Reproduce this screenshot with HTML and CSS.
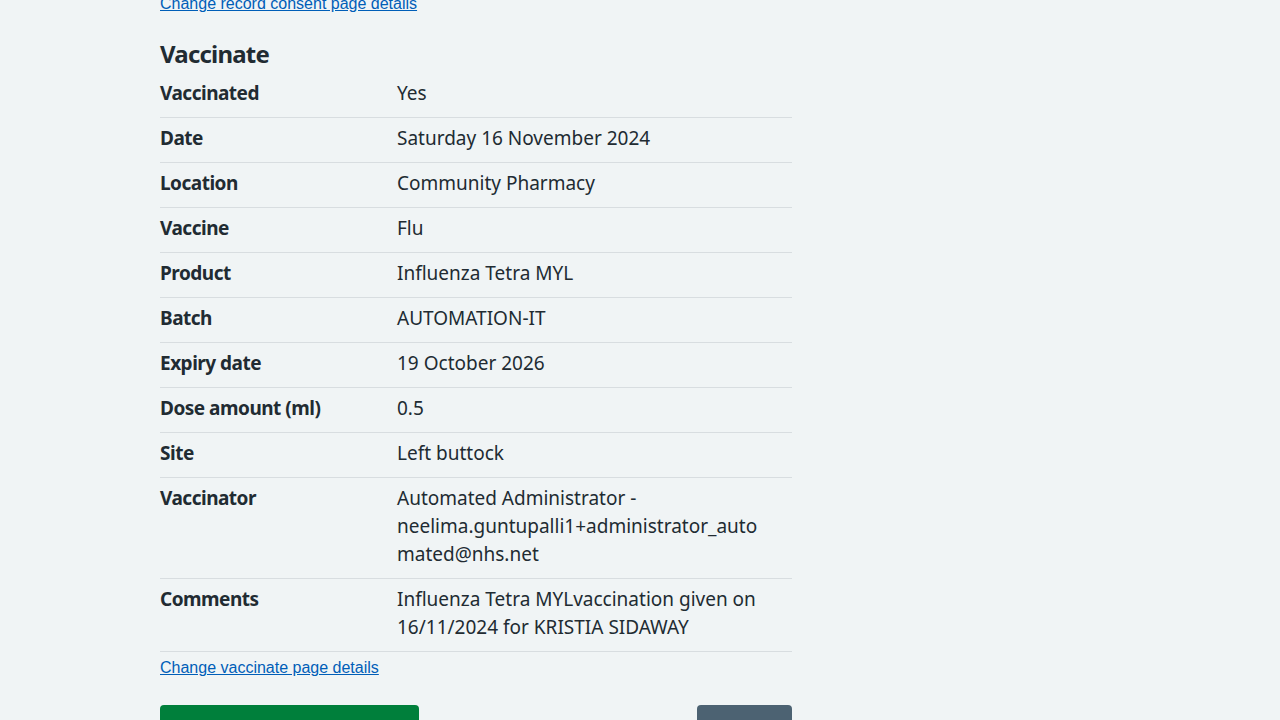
FILE: index.html
```html
<!DOCTYPE html>
<html lang="en">
<head>
<meta charset="utf-8">
<title>Check and confirm</title>
<link rel="stylesheet" href="styles.css">
</head>
<body>
<div class="container">
  <div class="column">
    <p class="change-link top-link"><a href="#">Change record consent page details</a></p>
    <h2 class="heading">Vaccinate</h2>
    <dl class="summary">
      <div class="row"><dt>Vaccinated</dt><dd>Yes</dd></div>
      <div class="row"><dt>Date</dt><dd>Saturday 16 November 2024</dd></div>
      <div class="row"><dt>Location</dt><dd>Community Pharmacy</dd></div>
      <div class="row"><dt>Vaccine</dt><dd>Flu</dd></div>
      <div class="row"><dt>Product</dt><dd>Influenza Tetra MYL</dd></div>
      <div class="row"><dt>Batch</dt><dd>AUTOMATION-IT</dd></div>
      <div class="row"><dt>Expiry date</dt><dd>19 October 2026</dd></div>
      <div class="row"><dt>Dose amount (ml)</dt><dd>0.5</dd></div>
      <div class="row"><dt>Site</dt><dd>Left buttock</dd></div>
      <div class="row"><dt>Vaccinator</dt><dd>Automated Administrator -<br>neelima.guntupalli1+administrator_auto<br>mated@nhs.net</dd></div>
      <div class="row"><dt>Comments</dt><dd>Influenza Tetra MYLvaccination given on<br>16/11/2024 for KRISTIA SIDAWAY</dd></div>
    </dl>
    <p class="change-link bottom-link"><a href="#">Change vaccinate page details</a></p>
    <div class="actions">
      <button class="btn btn-primary" type="button">Confirm and save</button>
      <button class="btn btn-secondary" type="button">Back</button>
    </div>
  </div>
</div>
</body>
</html>
```

FILE: styles.css
```css
html, body {
  margin: 0;
  padding: 0;
  background: #f0f4f5;
  color: #212b32;
  font-family: "Noto Sans", "Open Sans", sans-serif;
  overflow: hidden;
}

.container {
  width: 960px;
  margin: 0 auto;
}

.column {
  width: 632px;
}

.change-link {
  font-family: "Liberation Sans", Arial, sans-serif;
  font-size: 16px;
  margin: 0;
}

.change-link a {
  color: #005eb8;
  text-decoration: underline;
}

.top-link {
  margin-top: -5px;
}

.heading {
  font-size: 24px;
  line-height: 32px;
  font-weight: 700;
  letter-spacing: -0.8px;
  margin: 25px 0 3px;
}

.summary {
  margin: 0;
  font-size: 19px;
  line-height: 28px;
}

.row {
  display: flex;
  border-bottom: 1px solid #d8dde0;
}

.row dt {
  width: 237px;
  flex: none;
  font-weight: 700;
  letter-spacing: -0.5px;
  padding: 6px 0 10px;
}

.row dd {
  margin: 0;
  flex: 1;
  padding: 6px 0 10px;
}

.bottom-link {
  margin-top: 7px;
}

.actions {
  display: flex;
  justify-content: space-between;
  margin-top: 28px;
}

.btn {
  font-family: "Noto Sans", "Open Sans", sans-serif;
  font-size: 19px;
  line-height: 28px;
  font-weight: 600;
  color: #fff;
  border: 0;
  border-radius: 4px;
  padding: 14px 16px 12px;
  height: 56px;
}

.btn-primary {
  background: #007f3b;
  width: 259px;
}

.btn-secondary {
  background: #4c6272;
  width: 95px;
}
```
